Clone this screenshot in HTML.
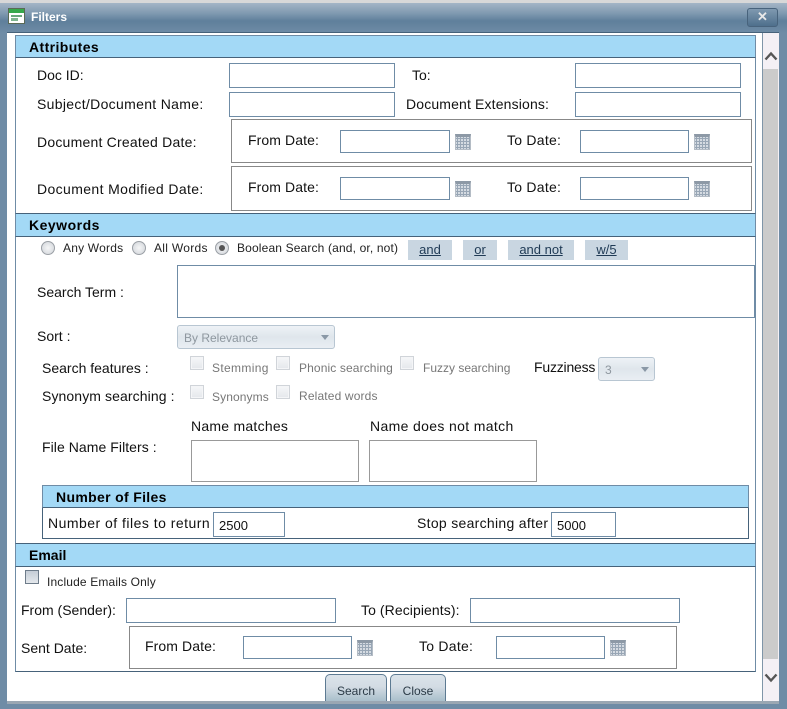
<!DOCTYPE html>
<html><head><meta charset="utf-8"><style>
html,body{margin:0;padding:0}
body{width:787px;height:709px;position:relative;overflow:hidden;background:#6f8ca6;font-family:"Liberation Sans",sans-serif;color:#111;font-size:14px}
div,span,a{position:absolute;box-sizing:border-box}
.t{white-space:nowrap;line-height:18px;height:18px}
.s{font-size:12px;color:#222}
.g{font-size:12px;color:#777}
.i{background:#fff;border:1px solid #6f8ca6}
.h{background:#a3d9f6;border-top:1px solid #46627a;border-bottom:1px solid #46627a;font-weight:bold;font-size:14px;color:#000;line-height:23px;height:24px}
.b{border:1px solid #888;background:#fff}
.c{width:16px;height:16px;border:1px solid #b4bcc5;border-top:3px solid #8d99a6;background-color:#d5dbe2;background-image:linear-gradient(#98a6b5 1px,transparent 1px),linear-gradient(90deg,#98a6b5 1px,transparent 1px);background-size:3px 3px;background-position:1px 1px}
.k{width:14px;height:14px;background:linear-gradient(#f6f7f9,#e4e7eb);border:1px solid #d0d4d9;box-shadow:inset 0 0 0 1px #f4f5f7}
.r{width:14px;height:14px;border-radius:50%;background:radial-gradient(circle,#f5f6f7,#cfd3d8);border:1px solid #9a9fa5}
.l{background:#c9d6e1;height:20px;line-height:20px;text-align:center;font-size:13px;color:#1f3a55;text-decoration:underline}
.sel{border:1px solid #b8c6d2;border-radius:3px;background:linear-gradient(#eef2f6,#dfe6ec 50%,#e9eef3);color:#8e979f;font-size:12px}
.sel:after{content:"";position:absolute;right:5px;top:9px;border-left:4px solid transparent;border-right:4px solid transparent;border-top:5px solid #8a98a6}
.btn{background:linear-gradient(#dbe3ea,#d3dce4 45%,#a9bfcb);border:1px solid #5d7a92;border-bottom:0;border-radius:5px 5px 0 0;text-align:center;font-size:12px;line-height:33px;color:#2b3a46}
</style></head><body>
<div style="left:0;top:0;width:787px;height:3px;background:#d8d8d8"></div>
<div style="left:0;top:3px;width:787px;height:30px;background:linear-gradient(#a4b5c6,#7f99b0 35%,#5f7f9b 60%,#6f8ca6)"></div>
<svg style="position:absolute;left:8px;top:8px" width="18" height="17" viewBox="0 0 18 17"><rect x=".5" y=".5" width="16" height="15" fill="#fff" stroke="#5a6a55"/><rect x="1" y="1" width="15" height="4" fill="#35a84a"/><rect x="3" y="7" width="11" height="2" fill="#6aa87c"/><rect x="3" y="10" width="7" height="3" fill="#7eb58e"/></svg>
<div class="t" style="left:31px;top:8px;color:#fff;font-weight:bold;font-size:12px">Filters</div>
<div style="left:747px;top:8px;width:31px;height:19px;border:1px solid #48637c;border-radius:3px;background:linear-gradient(#7f99b0,#4e6f8c);color:#e8e8e8;text-align:center;font-weight:bold;font-size:13px;line-height:16px">✕</div>

<div style="left:7px;top:32px;width:772px;height:669px;background:#fff;border-top:1px solid #46627a"></div>
<div style="left:762px;top:33px;width:17px;height:668px;background:#f4f0f5;border-left:1px solid #7f95a8"></div>
<div style="left:763px;top:69px;width:15px;height:590px;background:#cbcbcb"></div>
<svg style="position:absolute;left:764px;top:50px" width="14" height="12"><path d="M1.5 9.5L7 3.5L12.500 9.500" fill="none" stroke="#555" stroke-width="2.400"/></svg>
<svg style="position:absolute;left:764px;top:672px" width="14" height="12"><path d="M1.500 2.500L7 8.500L12.500 2.500" fill="none" stroke="#555" stroke-width="2.400"/></svg>
<div style="left:15px;top:35px;width:741px;height:637px;border:1px solid #6f8ca6;border-top:0;border-bottom:1px solid #46627a"></div>

<div class="h" style="left:15px;top:35px;width:741px;height:23px;line-height:22px;padding-left:13px;border-left:1px solid #6f8ca6;border-right:1px solid #6f8ca6;border-top:1px solid #6f8ca6;letter-spacing:.4px">Attributes</div>
<div class="t" style="left:37px;top:66px">Doc ID:</div>
<div class="i" style="left:229px;top:63px;width:166px;height:25px"></div>
<div class="t" style="left:412px;top:66px">To:</div>
<div class="i" style="left:575px;top:63px;width:166px;height:25px"></div>
<div class="t" style="left:37px;top:95px;letter-spacing:.32px">Subject/Document Name:</div>
<div class="i" style="left:229px;top:92px;width:166px;height:25px"></div>
<div class="t" style="left:406px;top:95px;letter-spacing:.15px">Document Extensions:</div>
<div class="i" style="left:575px;top:92px;width:166px;height:25px"></div>

<div class="t" style="left:37px;top:133px;letter-spacing:.22px">Document Created Date:</div>
<div class="b" style="left:231px;top:119px;width:521px;height:44px"></div>
<div class="t" style="left:248px;top:131px;letter-spacing:.1px">From Date:</div>
<div class="i" style="left:340px;top:130px;width:110px;height:23px"></div>
<div class="c" style="left:455px;top:134px"></div>
<div class="t" style="left:507px;top:131px;letter-spacing:.25px">To Date:</div>
<div class="i" style="left:580px;top:130px;width:109px;height:23px"></div>
<div class="c" style="left:694px;top:134px"></div>

<div class="t" style="left:37px;top:180px;letter-spacing:.38px">Document Modified Date:</div>
<div class="b" style="left:231px;top:166px;width:521px;height:45px"></div>
<div class="t" style="left:248px;top:178px;letter-spacing:.1px">From Date:</div>
<div class="i" style="left:340px;top:177px;width:110px;height:23px"></div>
<div class="c" style="left:455px;top:181px"></div>
<div class="t" style="left:507px;top:178px;letter-spacing:.25px">To Date:</div>
<div class="i" style="left:580px;top:177px;width:109px;height:23px"></div>
<div class="c" style="left:694px;top:181px"></div>

<div class="h" style="left:15px;top:213px;width:741px;padding-left:13px;border-left:1px solid #6f8ca6;border-right:1px solid #6f8ca6;letter-spacing:.5px">Keywords</div>
<div class="r" style="left:41px;top:241px"></div>
<div class="t s" style="left:63px;top:239px;letter-spacing:.2px">Any Words</div>
<div class="r" style="left:132px;top:241px"></div>
<div class="t s" style="left:154px;top:239px;letter-spacing:.3px">All Words</div>
<div class="r" style="left:215px;top:241px"><span style="left:3px;top:3px;width:6px;height:6px;border-radius:50%;background:#555"></span></div>
<div class="t s" style="left:237px;top:239px;letter-spacing:.15px">Boolean Search (and, or, not)</div>
<a class="l" style="left:408px;top:240px;width:44px">and</a>
<a class="l" style="left:463px;top:240px;width:34px">or</a>
<a class="l" style="left:508px;top:240px;width:66px">and not</a>
<a class="l" style="left:585px;top:240px;width:43px">w/5</a>

<div class="t" style="left:37px;top:283px">Search Term :</div>
<div class="i" style="left:177px;top:265px;width:578px;height:53px"></div>
<div class="t" style="left:37px;top:327px">Sort :</div>
<div class="sel" style="left:177px;top:325px;width:158px;height:24px;padding:5px 6px">By Relevance</div>

<div class="t" style="left:42px;top:359px">Search features :</div>
<div class="k" style="left:190px;top:356px"></div>
<div class="t g" style="left:212px;top:359px;letter-spacing:.35px">Stemming</div>
<div class="k" style="left:276px;top:356px"></div>
<div class="t g" style="left:299px;top:359px;letter-spacing:.12px">Phonic searching</div>
<div class="k" style="left:400px;top:356px"></div>
<div class="t g" style="left:423px;top:359px">Fuzzy searching</div>
<div class="t" style="left:534px;top:358px;letter-spacing:-.2px">Fuzziness</div>
<div class="sel" style="left:598px;top:357px;width:57px;height:24px;padding:5px 6px">3</div>

<div class="t" style="left:42px;top:387px;letter-spacing:.1px">Synonym searching :</div>
<div class="k" style="left:190px;top:385px"></div>
<div class="t g" style="left:212px;top:388px;letter-spacing:.1px">Synonyms</div>
<div class="k" style="left:276px;top:385px"></div>
<div class="t g" style="left:299px;top:387px;letter-spacing:.15px">Related words</div>

<div class="t" style="left:191px;top:417px;letter-spacing:.25px">Name matches</div>
<div class="t" style="left:370px;top:417px;letter-spacing:.35px">Name does not match</div>
<div class="t" style="left:42px;top:438px;letter-spacing:.06px">File Name Filters :</div>
<div class="b" style="left:191px;top:440px;width:168px;height:42px;border-color:#999"></div>
<div class="b" style="left:369px;top:440px;width:168px;height:42px;border-color:#999"></div>

<div style="left:42px;top:485px;width:707px;height:54px;border:1px solid #46627a;border-top:1px solid #6f8ca6;background:#fff"></div>
<div style="left:42px;top:485px;width:707px;height:23px;background:#a3d9f6;border:1px solid #6f8ca6;border-bottom:1px solid #46627a;font-weight:bold;color:#000;line-height:22px;padding-left:13px;letter-spacing:.33px">Number of Files</div>
<div class="t" style="left:48px;top:514px;letter-spacing:.48px">Number of files to return</div>
<div class="i" style="left:213px;top:512px;width:72px;height:25px;padding:6px 5px;font-size:13px;line-height:14px">2500</div>
<div class="t" style="left:417px;top:514px;letter-spacing:.3px">Stop searching after</div>
<div class="i" style="left:551px;top:512px;width:65px;height:25px;padding:6px 5px;font-size:13px;line-height:14px">5000</div>

<div class="h" style="left:15px;top:543px;width:741px;padding-left:13px;border-left:1px solid #6f8ca6;border-right:1px solid #6f8ca6">Email</div>
<div style="left:25px;top:570px;width:14px;height:14px;background:linear-gradient(#c5cdd6,#e4e8ec);border:1px solid #6e7c8a"></div>
<div class="t s" style="left:47px;top:573px;letter-spacing:.15px">Include Emails Only</div>
<div class="t" style="left:21px;top:601px">From (Sender):</div>
<div class="i" style="left:126px;top:598px;width:210px;height:25px"></div>
<div class="t" style="left:361px;top:601px;letter-spacing:.08px">To (Recipients):</div>
<div class="i" style="left:470px;top:598px;width:210px;height:25px"></div>
<div class="t" style="left:21px;top:639px">Sent Date:</div>
<div class="b" style="left:129px;top:626px;width:548px;height:43px"></div>
<div class="t" style="left:145px;top:637px;letter-spacing:.1px">From Date:</div>
<div class="i" style="left:243px;top:636px;width:109px;height:23px"></div>
<div class="c" style="left:357px;top:640px"></div>
<div class="t" style="left:419px;top:637px;letter-spacing:.25px">To Date:</div>
<div class="i" style="left:496px;top:636px;width:109px;height:23px"></div>
<div class="c" style="left:610px;top:640px"></div>

<div class="btn" style="left:325px;top:674px;width:62px;height:27px">Search</div>
<div class="btn" style="left:390px;top:674px;width:56px;height:27px">Close</div>
<div style="left:7px;top:701px;width:772px;height:3px;background:#9aa7b3"></div>
</body></html>
